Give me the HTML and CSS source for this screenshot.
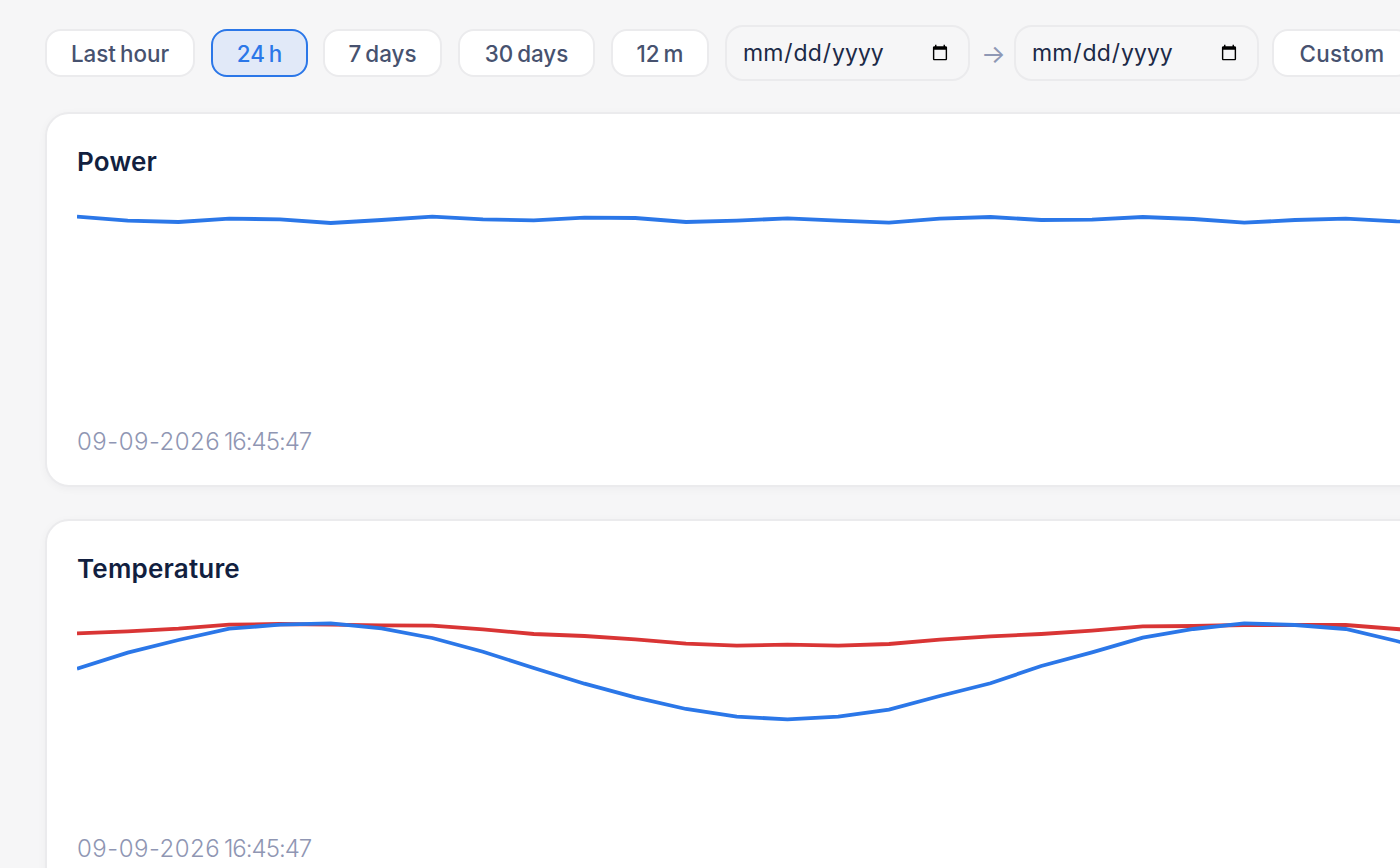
FILE: index.html
```html
<!DOCTYPE html>
<html lang="en">
<head>
    <meta charset="UTF-8">
    <meta name="viewport" content="width=device-width, initial-scale=1.0">
    <title>Charts</title>
    <link rel="stylesheet" href="styles.css">
</head>
<body>

    <!-- Range toolbar -->
    <div class="toolbar">
        <button type="button" class="range-btn btn-last">Last hour</button>
        <button type="button" class="range-btn btn-day active">24 h</button>
        <button type="button" class="range-btn btn-week">7 days</button>
        <button type="button" class="range-btn btn-month">30 days</button>
        <button type="button" class="range-btn btn-year">12 m</button>
        <div class="date-range">
            <input type="date" class="date-input">
            <span class="date-arrow">→</span>
            <input type="date" class="date-input">
        </div>
        <button type="button" class="range-btn btn-custom">Custom</button>
    </div>

    <!-- Power -->
    <section class="card">
        <h2 class="card-title">Power</h2>
        <svg class="chart" width="1400" height="200" viewBox="0 0 1400 200">
            <polyline class="line line-blue" points="0,30.7 50.75,34.7 101.5,36 152.25,32.7 203,33.3 253.75,37 304.5,34 355.25,30.7 406,33.3 456.75,34.3 507.5,31.7 558.25,32 609,36 659.75,34.7 710.5,32.3 761.25,34.7 812,36.7 862.75,32.7 913.5,31 964.25,34 1015,33.7 1065.75,31 1116.5,33 1167.25,36.7 1218,34 1268.75,32.7 1319.5,35.3 1370.25,36"/>
        </svg>
        <div class="card-time"><span class="time-date">09-09-2026</span> <span class="time-clock">16:45:47</span></div>
    </section>

    <!-- Temperature -->
    <section class="card">
        <h2 class="card-title">Temperature</h2>
        <svg class="chart" width="1400" height="200" viewBox="0 0 1400 200">
            <polyline class="line line-red" points="0,40.3 50.75,38.3 101.5,35.7 152.25,31.7 203,31 253.75,31.7 304.5,32.3 355.25,32.7 406,36.3 456.75,41 507.5,43 558.25,46.3 609,50.7 659.75,52.7 710.5,51.7 761.25,52.7 812,51 862.75,46.7 913.5,43.3 964.25,41 1015,37.7 1065.75,33.3 1116.5,33 1167.25,32 1218,32 1268.75,32 1319.5,36 1370.25,40"/>
            <polyline class="line line-blue" points="0,75.7 50.75,59.7 101.5,47 152.25,35.7 203,31.7 253.75,30.3 304.5,35.3 355.25,45 406,58.7 456.75,75 507.5,90.7 558.25,104.3 609,116 659.75,123.7 710.5,126.3 761.25,123.7 812,116.7 862.75,103 913.5,90.3 964.25,73 1015,59.3 1065.75,44.7 1116.5,36 1167.25,30.3 1218,32 1268.75,36 1319.5,48 1370.25,62"/>
        </svg>
        <div class="card-time"><span class="time-date">09-09-2026</span> <span class="time-clock">16:45:47</span></div>
    </section>

</body>
</html>
```

FILE: styles.css
```css
html, body {
    height: 868px;
    overflow: hidden;
}

body {
    margin: 0;
    width: 1500px;
    padding: 25px 0 0 45px;
    box-sizing: border-box;
    background-color: #f6f6f7;
    font-family: 'Inter', sans-serif;
}

/* Toolbar */
.toolbar {
    display: flex;
    align-items: center;
    gap: 16px;
    height: 56px;
    margin-bottom: 31px;
}

.range-btn {
    height: 48px;
    padding: 0;
    font-family: inherit;
    font-size: 22.4px;
    font-weight: 550;
    word-spacing: -2px;
    color: #47526f;
    background-color: #fff;
    border: 2px solid #ebebed;
    border-radius: 16px;
    box-sizing: border-box;
}

.btn-last { width: 150px; }
.btn-day { width: 97px; margin-right: -1px; }
.btn-week { width: 119px; }
.btn-month { width: 137px; }
.btn-year { width: 98px; }
.btn-custom { width: 140px; margin-left: -3px; letter-spacing: 0.4px; }

.range-btn.active {
    color: #2b77e8;
    background-color: #e1e9f8;
    border-color: #2b77e8;
}

.date-range {
    display: flex;
    align-items: center;
    gap: 11px;
}

.date-input {
    width: 245px;
    height: 56px;
    padding: 0 15px;
    font-family: 'Inter', sans-serif;
    font-size: 23px;
    color: #1c2a47;
    background-color: #f6f6f7;
    border: 2px solid #ebebed;
    border-radius: 18px;
    box-sizing: border-box;
}

.date-input::-webkit-calendar-picker-indicator {
    width: 18px;
    height: 18px;
    padding: 0;
    margin: 0 4px 0 0;
}

.date-arrow {
    width: 22px;
    font-size: 26px;
    text-align: center;
    color: #8f98b5;
}

/* Cards */
.card {
    width: 1440px;
    height: 375px;
    margin-bottom: 32px;
    padding: 30px 0 0 30px;
    background-color: #fff;
    border: 2px solid #ebebed;
    border-radius: 24px;
    box-sizing: border-box;
    box-shadow: 0 2px 8px rgba(20, 30, 60, 0.04);
}

.card-title {
    margin: 0;
    height: 36px;
    font-size: 26px;
    line-height: 36px;
    font-weight: 600;
    letter-spacing: 0.2px;
    color: #121f40;
}

.chart {
    display: block;
    margin-top: 6px;
}

.line {
    fill: none;
    stroke-width: 3.8;
}

.line-blue { stroke: #2b77e8; }
.line-red { stroke: #d93535; }

.card-time {
    margin-top: 40px;
    font-size: 24px;
    line-height: 32px;
    font-weight: 300;
    word-spacing: -3px;
    color: #8f96b3;
}

.time-date { letter-spacing: 0.5px; }
.time-clock { letter-spacing: -1px; }
```
